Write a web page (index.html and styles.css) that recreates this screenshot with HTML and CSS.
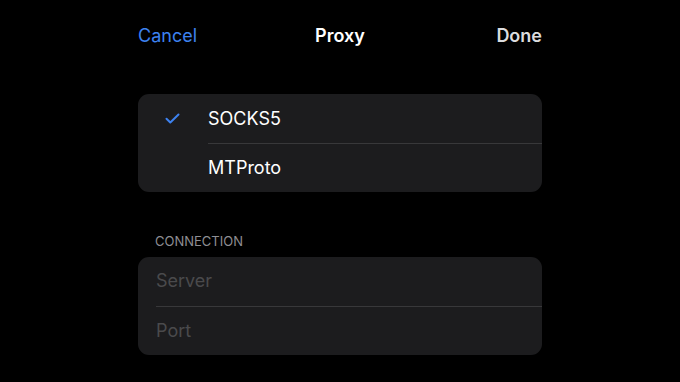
FILE: index.html
```html
<!DOCTYPE html>
<html lang="en">
<head>
  <meta charset="UTF-8">
  <meta name="viewport" content="width=device-width, initial-scale=1.0">
  <title>Proxy</title>
  <link rel="stylesheet" href="styles.css">
</head>
<body>
  <div class="sheet">
    <div class="nav">
      <span class="nav-btn cancel">Cancel</span>
      <span class="nav-title">Proxy</span>
      <span class="nav-btn done">Done</span>
    </div>

    <div class="group">
      <div class="row">
        <span class="check">
          <svg width="15" height="11" viewBox="0 0 15 11">
            <path d="M1.5 5.8 L5.3 9.5 L13.5 1.5" fill="none" stroke="#3d82f0" stroke-width="2" stroke-linecap="round" stroke-linejoin="round"/>
          </svg>
        </span>
        <span class="label">SOCKS5</span>
      </div>
      <div class="row">
        <span class="check"></span>
        <span class="label">MTProto</span>
      </div>
    </div>

    <div class="section-title">CONNECTION</div>
    <div class="group inputs">
      <div class="row"><span class="placeholder">Server</span></div>
      <div class="row"><span class="placeholder">Port</span></div>
    </div>
  </div>
</body>
</html>
```

FILE: styles.css
```css
body {
  margin: 0;
  background: #000;
  font-family: Inter, "Liberation Sans", sans-serif;
  color: #fff;
}

.sheet {
  width: 404px;
  margin: 0 auto;
  padding-top: 23px;
}

.nav {
  display: grid;
  grid-template-columns: 1fr auto 1fr;
  align-items: center;
  height: 24px;
  font-size: 18px;
}

.cancel {
  color: #3d82f0;
}

.nav-title {
  font-weight: 600;
}

.done {
  justify-self: end;
  font-weight: 600;
  color: #dcdcde;
}

.group {
  margin-top: 47px;
  background: #1c1c1e;
  border-radius: 11px;
  overflow: hidden;
}

.row {
  display: flex;
  align-items: center;
  height: 49px;
  font-size: 18px;
}

.row .check {
  width: 70px;
  padding-left: 27px;
  box-sizing: border-box;
  display: flex;
  align-items: center;
}

.row .label {
  flex: 1;
  align-self: stretch;
  display: flex;
  align-items: center;
  padding-bottom: 2px;
  box-sizing: border-box;
}

.row:first-child .label {
  padding-bottom: 0;
}

.row + .row .label {
  border-top: 1px solid #38383a;
}

.section-title {
  margin-top: 41px;
  padding-left: 17px;
  font-size: 13px;
  color: #8e8e93;
  height: 24px;
}

.inputs {
  margin-top: 0;
}

.inputs .placeholder {
  flex: 1;
  align-self: stretch;
  display: flex;
  align-items: center;
  margin-left: 18px;
  padding-bottom: 2px;
  box-sizing: border-box;
  color: #4a4a4c;
}

.inputs .row + .row .placeholder {
  border-top: 1px solid #38383a;
}
```
